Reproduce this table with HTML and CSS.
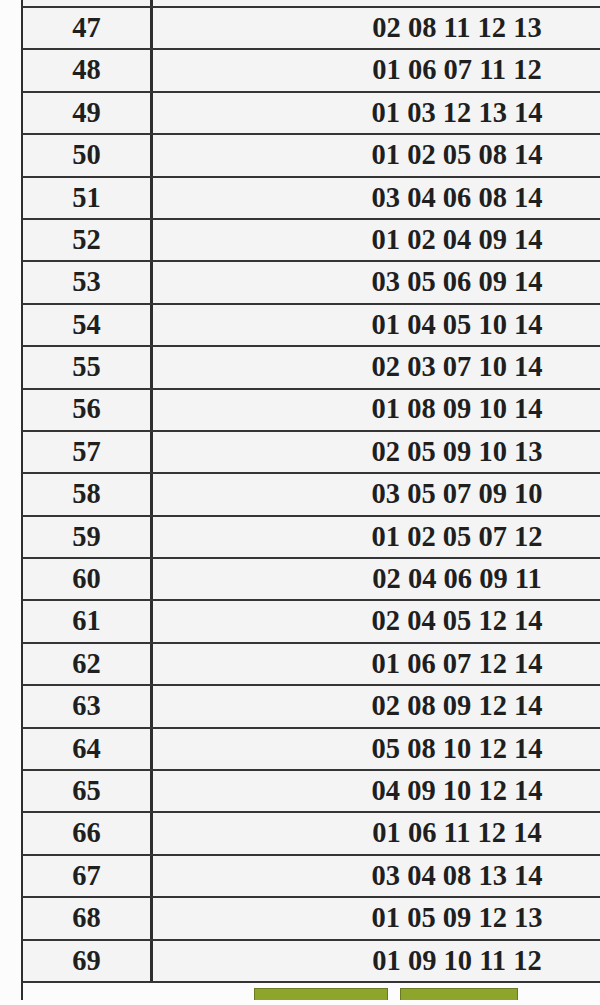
FILE: index.html
```html
<!DOCTYPE html>
<html lang="en">
<head>
<meta charset="utf-8">
<title>Table</title>
<link rel="stylesheet" href="styles.css">
</head>
<body>
<div class="sheet">
  <div class="row lead"><div class="num"></div><div class="combo"></div></div>
  <div class="row"><div class="num">47</div><div class="combo">02 08 11 12 13</div></div>
  <div class="row"><div class="num">48</div><div class="combo">01 06 07 11 12</div></div>
  <div class="row"><div class="num">49</div><div class="combo">01 03 12 13 14</div></div>
  <div class="row"><div class="num">50</div><div class="combo">01 02 05 08 14</div></div>
  <div class="row"><div class="num">51</div><div class="combo">03 04 06 08 14</div></div>
  <div class="row"><div class="num">52</div><div class="combo">01 02 04 09 14</div></div>
  <div class="row"><div class="num">53</div><div class="combo">03 05 06 09 14</div></div>
  <div class="row"><div class="num">54</div><div class="combo">01 04 05 10 14</div></div>
  <div class="row"><div class="num">55</div><div class="combo">02 03 07 10 14</div></div>
  <div class="row"><div class="num">56</div><div class="combo">01 08 09 10 14</div></div>
  <div class="row"><div class="num">57</div><div class="combo">02 05 09 10 13</div></div>
  <div class="row"><div class="num">58</div><div class="combo">03 05 07 09 10</div></div>
  <div class="row"><div class="num">59</div><div class="combo">01 02 05 07 12</div></div>
  <div class="row"><div class="num">60</div><div class="combo">02 04 06 09 11</div></div>
  <div class="row"><div class="num">61</div><div class="combo">02 04 05 12 14</div></div>
  <div class="row"><div class="num">62</div><div class="combo">01 06 07 12 14</div></div>
  <div class="row"><div class="num">63</div><div class="combo">02 08 09 12 14</div></div>
  <div class="row"><div class="num">64</div><div class="combo">05 08 10 12 14</div></div>
  <div class="row"><div class="num">65</div><div class="combo">04 09 10 12 14</div></div>
  <div class="row"><div class="num">66</div><div class="combo">01 06 11 12 14</div></div>
  <div class="row"><div class="num">67</div><div class="combo">03 04 08 13 14</div></div>
  <div class="row"><div class="num">68</div><div class="combo">01 05 09 12 13</div></div>
  <div class="row"><div class="num">69</div><div class="combo">01 09 10 11 12</div></div>
  <div class="tail">
    <div class="bar bar-a"></div>
    <div class="bar bar-b"></div>
  </div>
</div>
</body>
</html>
```
FILE: styles.css
```css
html, body {
  margin: 0;
  padding: 0;
  background: #fcfcfc;
  overflow: hidden;
}
.sheet {
  margin-left: 21px;
  overflow: hidden;
  font-family: "Liberation Serif", "Times New Roman", serif;
  font-weight: bold;
  font-size: 28.5px;
  color: #1f1f1f;
}
.row {
  display: grid;
  grid-template-columns: 130px 608px;
  height: 42.4px;
  box-sizing: border-box;
  border-left: 2px solid #2e2e2e;
  border-bottom: 2px solid #353535;
  background: #f4f4f4;
}
.row.lead {
  height: 8px;
}
.num {
  border-right: 3px solid #2e2e2e;
  display: flex;
  align-items: center;
  justify-content: center;
  line-height: 1;
}
.combo {
  display: flex;
  align-items: center;
  justify-content: center;
  line-height: 1;
  white-space: nowrap;
}
.tail {
  display: flex;
  gap: 12px;
  height: 17px;
  padding-left: 231px;
  border-left: 2px solid #2e2e2e;
  align-items: flex-start;
}
.bar {
  margin-top: 5px;
  height: 13px;
  box-sizing: border-box;
  background: #8ea52b;
  border: 1px solid #6a7a22;
  flex: none;
}
.bar-a { width: 134px; }
.bar-b { width: 118px; }
```
